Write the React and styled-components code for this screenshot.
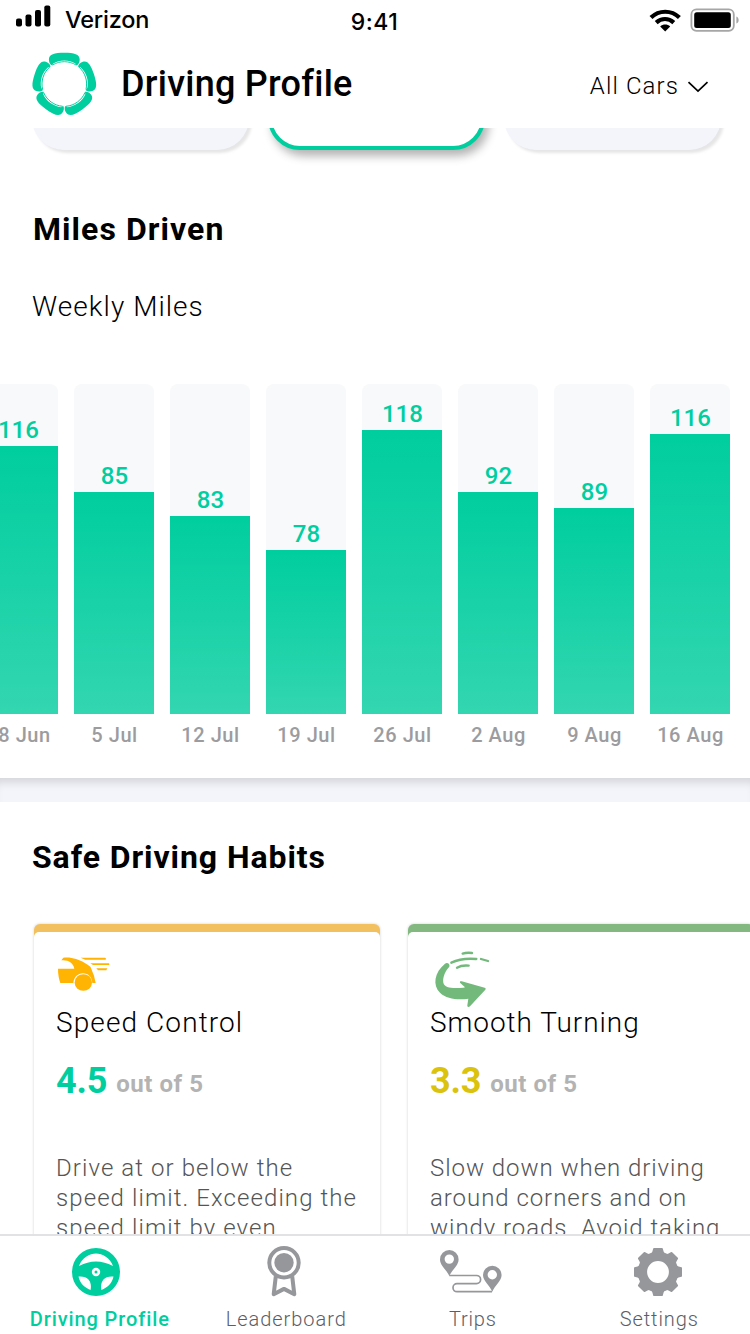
import React from "react";
import styled, { createGlobalStyle } from "styled-components";

const GREEN = "#00ce9f";
const GREY = "#96979b";

const GlobalStyle = createGlobalStyle`
  * { box-sizing: border-box; }
  body {
    margin: 0;
    background: #fff;
    font-family: Roboto, "Liberation Sans", sans-serif;
    color: #000;
  }
  h1, h2, h3, p { margin: 0; font-weight: 400; }
  svg { display: block; overflow: visible; }
`;

const Screen = styled.div`
  width: 750px;
  height: 1334px;
  display: flex;
  flex-direction: column;
  overflow: hidden;
  background: #fff;
`;

const StatusBar = styled.div`
  flex: none;
  display: grid;
  grid-template-columns: 1fr auto 1fr;
  align-items: center;
  height: 40px;
  padding: 0 11px 0 16px;
  font-family: Inter, "Liberation Sans", sans-serif;
`;

const Carrier = styled.div`
  display: flex;
  align-items: center;
  gap: 14px;
  padding-bottom: 2px;
  font-size: 23.5px;
  font-weight: 500;
  letter-spacing: -0.2px;
`;

const Clock = styled.div`
  padding: 4px 6px 0 0;
  font-size: 23px;
  font-weight: 550;
  letter-spacing: 0.5px;
`;

const StatusIcons = styled.div`
  display: flex;
  justify-content: flex-end;
  align-items: center;
  gap: 9px;
`;

const Header = styled.header`
  flex: none;
  display: flex;
  align-items: center;
  height: 88px;
  padding: 0 42px 0 33px;
`;

const PageTitle = styled.h1`
  flex: 1;
  margin-left: 22px;
  font-size: 36px;
  font-weight: 500;
  letter-spacing: 0.25px;
`;

const CarFilter = styled.button`
  display: flex;
  align-items: center;
  gap: 9px;
  padding: 4px 0 0;
  border: 0;
  background: none;
  font-family: inherit;
  font-size: 24px;
  font-weight: 300;
  letter-spacing: 1.1px;
  color: #000;
`;

const Content = styled.main`
  flex: 1;
  min-height: 0;
  overflow: hidden;
`;

const MilesSection = styled.section`
  height: 650px;
  overflow: hidden;
`;

const Pills = styled.div`
  display: flex;
  gap: 19px;
  margin-top: -98px;
  padding-left: 32px;
`;

const Pill = styled.div`
  flex: none;
  width: 217px;
  height: 120px;
  border-radius: 32px;
  border: ${(p) => (p.$active ? `4px solid ${GREEN}` : "0")};
  background: ${(p) => (p.$active ? "#fff" : "#f4f5fb")};
  box-shadow: ${(p) =>
    p.$active ? "4px 6px 10px rgba(0,0,0,.3)" : "3px 3px 3px rgba(0,0,0,.1)"};
`;

const SectionTitle = styled.h2`
  margin: ${(p) => p.$top}px 0 0 ${(p) => p.$left}px;
  font-size: 32px;
  line-height: 40px;
  font-weight: 700;
  letter-spacing: ${(p) => p.$spacing}px;
`;

const ChartTitle = styled.h3`
  margin: 42px 0 0 32px;
  font-size: 28px;
  line-height: 32px;
  font-weight: 300;
  letter-spacing: 1.05px;
`;

const Chart = styled.div`
  display: flex;
  gap: 16px;
  margin: 61px 0 0 -22px;
`;

const Column = styled.div`
  flex: none;
  width: 80px;
  text-align: center;
`;

const Track = styled.div`
  display: flex;
  flex-direction: column;
  justify-content: flex-end;
  height: 330px;
  border-radius: 8px 8px 0 0;
  background: #f8f9fb;
`;

const Value = styled.div`
  padding-left: 1px;
  font-size: 24px;
  line-height: 32px;
  font-weight: 500;
  letter-spacing: 0.1px;
  color: ${GREEN};
`;

const Bar = styled.div`
  flex: none;
  background: linear-gradient(${GREEN}, #33d6b0);
`;

const DateLabel = styled.div`
  margin-top: 9px;
  padding-left: 1px;
  font-size: 20px;
  line-height: 24px;
  font-weight: 500;
  letter-spacing: 0.55px;
  white-space: nowrap;
  color: #9c9c9f;
`;

const Divider = styled.div`
  height: 24px;
  background: #f4f5fb;
  box-shadow: inset 0 10px 10px -6px rgba(0, 0, 0, 0.14);
`;

const Cards = styled.div`
  display: flex;
  gap: 28px;
  margin-top: 47px;
  padding-left: 34px;
`;

const Card = styled.article`
  flex: none;
  width: 346px;
  height: 500px;
  padding-top: 8px;
  border-radius: 6px;
  background: ${(p) => p.$accent};
  box-shadow: 0 0 2px 1px rgba(0, 0, 0, 0.09);
`;

const CardBody = styled.div`
  height: 100%;
  padding-left: 22px;
  border-radius: 5px 5px 0 0;
  background: #fff;
`;

const CardTitle = styled.h3`
  font-size: 28px;
  line-height: 36px;
  font-weight: 300;
  letter-spacing: ${(p) => p.$spacing}px;
`;

const Rating = styled.div`
  display: flex;
  align-items: center;
  gap: 9px;
  height: 44px;
  margin-top: 18px;
  line-height: 44px;
`;

const Score = styled.span`
  font-size: 36px;
  font-weight: 700;
  letter-spacing: -0.2px;
  color: ${(p) => p.$color};
`;

const Scale = styled.span`
  padding-top: 5px;
  font-size: 24px;
  font-weight: 700;
  letter-spacing: 0.55px;
  color: #b3b3b3;
`;

const Advice = styled.p`
  margin-top: 50px;
  font-size: 24px;
  line-height: 30px;
  font-weight: 300;
  letter-spacing: ${(p) => p.$spacing}px;
  white-space: pre-line;
  color: #555;
`;

const Nav = styled.nav`
  flex: none;
  display: flex;
  height: 100px;
  padding-left: 6px;
  border-top: 2px solid #e2e2e4;
  background: #fff;
`;

const NavItem = styled.a`
  flex: none;
  display: flex;
  flex-direction: column;
  align-items: center;
  width: 186.5px;
  padding-left: 1px;
  font-size: 20px;
  line-height: 24px;
  font-weight: ${(p) => (p.$active ? 500 : 300)};
  letter-spacing: ${(p) => p.$spacing}px;
  color: ${(p) => (p.$active ? GREEN : "#5c5d66")};
`;

const NavIcon = styled.span`
  height: 71px;
  padding-top: 8px;
  margin-right: ${(p) => p.$shift || 0}px;
`;

const PETAL =
  "M-12.2-18.4C-14.600-19.800-15.400-22-15.400-24.500C-15.400-29.600-10-31.200 0-31.200S15.400-29.600 15.400-24.500C15.400-22 14.600-19.800 12.200-18.400L11-20.600C8-22.600 4-23.600 0-23.600S-8-22.600-11-20.600Z";

const Logo = () => (
  <svg width="66" height="64" viewBox="-31.3 -32 66 64">
    {[0, 72, 144, 216, 288].map((a) => (
      <g key={a} transform={`rotate(${a})`}>
        <path d={PETAL} fill={GREEN} />
        <path d="M-11.8-19C-8-21.300-4-22.300 0-22.300S8-21.300 11.800-19" fill="none" stroke={GREEN} strokeWidth="0.9" />
      </g>
    ))}
  </svg>
);

const Signal = () => (
  <svg width="35" height="24" viewBox="0 1 35 24">
    <rect x="0" y="12.5" width="6" height="8" rx="2" />
    <rect x="9.5" y="8.5" width="6" height="12" rx="2" />
    <rect x="19" y="4" width="6" height="16.5" rx="2" />
    <rect x="28.3" y="-0.5" width="6" height="21" rx="2" />
  </svg>
);

const Wifi = () => (
  <svg width="32" height="23" viewBox="0 0 32 23">
    <path d="M2 8.6C10 0.8 22.400 0.8 30.400 8.6" fill="none" stroke="#000" strokeWidth="4.200" />
    <path d="M7.2 13.6C12.400 8.8 19.600 8.8 24.800 13.6" fill="none" stroke="#000" strokeWidth="4.200" />
    <path d="M11.2 17.4C14.100 14.8 18.300 14.8 21.200 17.4L16.200 22.400Z" />
  </svg>
);

const Battery = () => (
  <svg width="49" height="24" viewBox="0 0 49 24">
    <rect x="1.4" y="1.4" width="42.4" height="21.4" rx="5" fill="none" stroke="#a6a6a6" strokeWidth="1.8" />
    <rect x="4.2" y="4.2" width="36.600" height="15.8" rx="2.5" />
    <path d="M46.400 8.4C49.400 9.6 49.400 14.4 46.400 15.6Z" fill="#a6a6a6" />
  </svg>
);

const Chevron = () => (
  <svg width="20" height="12" viewBox="0 0 20 12" fill="none" stroke="#000" strokeWidth="1.7">
    <path d="M0.5 2.2L10 11L19.5 2.2" />
  </svg>
);

const CarIcon = () => (
  <svg width="74" height="73" viewBox="108 66 222 219" fill="#ffb303">
    <path d="M124 151L130 143C142 141 157 143 168 147C182 151 193 158 204 165C210 169 213 172 214 177L222 197L227 219H217C216 202 205 190 189 190C173 190 161 203 160 219H121C117 206 114 195 114 176H163C160 159 145 149 124 151Z" />
    <ellipse cx="190" cy="217.500" rx="26" ry="25" />
    <path d="M182 143H254Q257 143 258 146T255 149H196Z" />
    <path d="M211 160H267Q270 163 267 165H219Z" />
    <path d="M229 175H262L259 181H234Z" />
  </svg>
);

const TurnIcon = () => (
  <svg width="74" height="73" viewBox="120 66 222 219">
    <path
      d="M165 161C171 156 181 161 178 170C168 180 157 200 160 218C164 235 188 235 220 233L225 232L210 218C209 214 211 213 215 214L284 233C288 235 288 236 286 239L240 289C236 293 231 291 232 286L235 266C205 270 170 268 150 248C127 225 133 187 165 161Z"
      fill="#72b97b"
    />
    <g fill="none" stroke="#72b97b" strokeWidth="7" strokeLinecap="round">
      <path d="M218 131Q230 127 246 129" />
      <path d="M184 158Q215 143 259 147" />
      <path d="M273 147L294 153" />
      <path d="M201 173Q215 165 236 167" />
    </g>
  </svg>
);

const WheelIcon = () => (
  <svg width="48" height="48" viewBox="-24 -20 48 48">
    <g transform="translate(0 8)">
      <circle r="24" fill={GREEN} />
      <g fill="#fff">
        <path d="M-17-6C-14.500-14-6-18.500 0-18.500S14.500-14 17-6C11-9 6-10.500 0-10.500S-11-9-17-6Z" />
        <path d="M-17.500 4.500C-13 4.200-9.500 5-7.500 7.500C-5 10.500-4.600 14-5.400 18C-11.500 15.500-16 11.500-17.500 4.500Z" />
        <path d="M17.500 4.500C13 4.200 9.500 5 7.500 7.500C5 10.500 4.600 14 5.400 18C11.500 15.500 16 11.500 17.500 4.500Z" />
        <circle r="4.200" />
      </g>
      <circle r="1.500" fill={GREEN} />
    </g>
  </svg>
);

const MedalIcon = () => (
  <svg width="48" height="48" viewBox="-24 -18.7 48 48" fill="none" stroke={GREY} strokeWidth="4">
    <circle r="14.700" />
    <circle r="9.700" fill={GREY} stroke="none" />
    <path d="M-8.200 13.500L-10.300 31.500L0 26.200L10.300 31.500L8.200 13.500" strokeLinejoin="round" />
  </svg>
);

const PIN =
  "M0 16.600C-2.500 10.500-9.300 6-9.300 0A9.300 9.300 0 0 1 9.300 0C9.300 6 2.500 10.500 0 16.600ZM0-5A4.700 4.700 0 1 0 0 4.400A4.700 4.700 0 0 0 0-5Z";

const TripsIcon = () => (
  <svg width="62" height="48" viewBox="0 -3.8 62 48" fill={GREY} fillRule="evenodd">
    <path d={PIN} transform="translate(9.300 11.600)" />
    <path d={PIN} transform="translate(52.300 27.300)" />
    <path
      d="M9.300 27.700H36.500A4.100 4.100 0 0 1 36.500 35.900H17A4 4 0 0 0 17 43.900H52"
      fill="none"
      stroke={GREY}
      strokeWidth="1.700"
    />
  </svg>
);

const GearIcon = () => (
  <svg width="48" height="48" viewBox="-24 -20 48 48">
    <g transform="translate(0 8)">
      {[0, 45, 90, 135, 180, 225, 270, 315].map((a) => (
        <path key={a} d="M-7.500-17L-5.600-20.500L-4.800-23.500Q-4.600-24-4-24H4Q4.600-24 4.800-23.500L5.600-20.500L7.500-17Z" fill={GREY} transform={`rotate(${a})`} />
      ))}
      <circle r="15.600" fill="none" stroke={GREY} strokeWidth="9.400" />
    </g>
  </svg>
);

const WEEKS = [
  { date: "28 Jun", miles: 116, height: 268 },
  { date: "5 Jul", miles: 85, height: 222 },
  { date: "12 Jul", miles: 83, height: 198 },
  { date: "19 Jul", miles: 78, height: 164 },
  { date: "26 Jul", miles: 118, height: 284 },
  { date: "2 Aug", miles: 92, height: 222 },
  { date: "9 Aug", miles: 89, height: 206 },
  { date: "16 Aug", miles: 116, height: 280 },
];

const HABITS = [
  {
    title: "Speed Control",
    spacing: 1.1,
    score: "4.5",
    color: GREEN,
    accent: "#f2c05f",
    Icon: CarIcon,
    adviceSpacing: 1.08,
    advice: "Drive at or below the\nspeed limit. Exceeding the\nspeed limit by even",
  },
  {
    title: "Smooth Turning",
    spacing: 0.95,
    score: "3.3",
    color: "#dbc20c",
    accent: "#83b881",
    Icon: TurnIcon,
    adviceSpacing: 0.95,
    advice: "Slow down when driving\naround corners and on\nwindy roads. Avoid taking",
  },
];

const TABS = [
  { label: "Driving Profile", Icon: WheelIcon, active: true, spacing: 0.9, shift: 7 },
  { label: "Leaderboard", Icon: MedalIcon, spacing: 0.95, shift: 4 },
  { label: "Trips", Icon: TripsIcon, spacing: 0.8, shift: 4 },
  { label: "Settings", Icon: GearIcon, spacing: 0.9, shift: 2.5 },
];

export default function App() {
  return (
    <>
      <GlobalStyle />
      <Screen>
        <StatusBar>
          <Carrier>
            <Signal />
            Verizon
          </Carrier>
          <Clock>9:41</Clock>
          <StatusIcons>
            <Wifi />
            <Battery />
          </StatusIcons>
        </StatusBar>
        <Header>
          <Logo />
          <PageTitle>Driving Profile</PageTitle>
          <CarFilter>
            All Cars
            <Chevron />
          </CarFilter>
        </Header>
        <Content>
          <MilesSection>
            <Pills>
              <Pill />
              <Pill $active />
              <Pill />
            </Pills>
            <SectionTitle $top={59} $left={33} $spacing={1.05}>Miles Driven</SectionTitle>
            <ChartTitle>Weekly Miles</ChartTitle>
            <Chart>
              {WEEKS.map((week) => (
                <Column key={week.date}>
                  <Track>
                    <Value>{week.miles}</Value>
                    <Bar style={{ height: week.height }} />
                  </Track>
                  <DateLabel>{week.date}</DateLabel>
                </Column>
              ))}
            </Chart>
          </MilesSection>
          <Divider />
          <section>
            <SectionTitle $top={35} $left={32} $spacing={0.92}>Safe Driving Habits</SectionTitle>
            <Cards>
              {HABITS.map(({ title, spacing, score, color, accent, Icon, advice, adviceSpacing }) => (
                <Card key={title} $accent={accent}>
                  <CardBody>
                    <Icon />
                    <CardTitle $spacing={spacing}>{title}</CardTitle>
                    <Rating>
                      <Score $color={color}>{score}</Score>
                      <Scale>out of 5</Scale>
                    </Rating>
                    <Advice $spacing={adviceSpacing}>{advice}</Advice>
                  </CardBody>
                </Card>
              ))}
            </Cards>
          </section>
        </Content>
        <Nav>
          {TABS.map(({ label, Icon, active, spacing, shift }) => (
            <NavItem key={label} $active={active} $spacing={spacing}>
              <NavIcon $shift={shift}>
                <Icon />
              </NavIcon>
              {label}
            </NavItem>
          ))}
        </Nav>
      </Screen>
    </>
  );
}
